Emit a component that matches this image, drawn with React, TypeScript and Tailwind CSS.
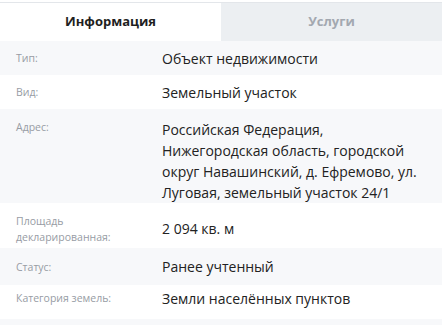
const rows: { label: string[]; value: string[]; h: string; align: string }[] = [
  { label: ['Тип:'], value: ['Объект недвижимости'], h: 'h-[34px]', align: 'items-center' },
  { label: ['Вид:'], value: ['Земельный участок'], h: 'h-[34px]', align: 'items-center' },
  {
    label: ['Адрес:'],
    value: [
      'Российская Федерация,',
      'Нижегородская область, городской',
      'округ Навашинский, д. Ефремово, ул.',
      'Луговая, земельный участок 24/1',
    ],
    h: 'h-[94px]',
    align: 'items-start pt-[10px]',
  },
  { label: ['Площадь', 'декларированная:'], value: ['2 094 кв. м'], h: 'h-[45px]', align: 'items-center pt-[6px]' },
  { label: ['Статус:'], value: ['Ранее учтенный'], h: 'h-[37px]', align: 'items-center' },
  { label: ['Категория земель:'], value: ['Земли населённых пунктов'], h: 'h-[34px]', align: 'items-center pb-[8px]' },
]

export default function App() {
  return (
    <div className="w-[442px] h-[325px] overflow-hidden bg-[#f7f8fa] font-['Open_Sans',sans-serif]">
      <div className="h-[2px] bg-white" />
      <div className="h-px bg-[#e3e6ea]" />
      <div className="flex h-[38px]">
        <div className="w-[221px] bg-white flex items-center justify-center text-[13px] font-bold text-[#1f1f1f]">
          Информация
        </div>
        <div className="flex-1 bg-[#eceff2] flex items-center justify-center text-[13px] font-bold text-[#a3a8b0]">
          Услуги
        </div>
      </div>
      {rows.map((r, i) => (
        <div
          key={i}
          className={`flex ${r.h} ${r.align} ${i % 2 === 0 ? 'bg-[#f7f8fa]' : 'bg-white'}`}
        >
          <div className="w-[162px] pl-[16px] pr-2 text-[10.5px] leading-[16px] text-[#979ca4]">
            {r.label.map((l, j) => (
              <div key={j}>{l}</div>
            ))}
          </div>
          <div className="flex-1 text-[14px] leading-[21px] text-[#222222]">
            {r.value.map((v, j) => (
              <div key={j} className="whitespace-nowrap">{v}</div>
            ))}
          </div>
        </div>
      ))}
    </div>
  )
}
